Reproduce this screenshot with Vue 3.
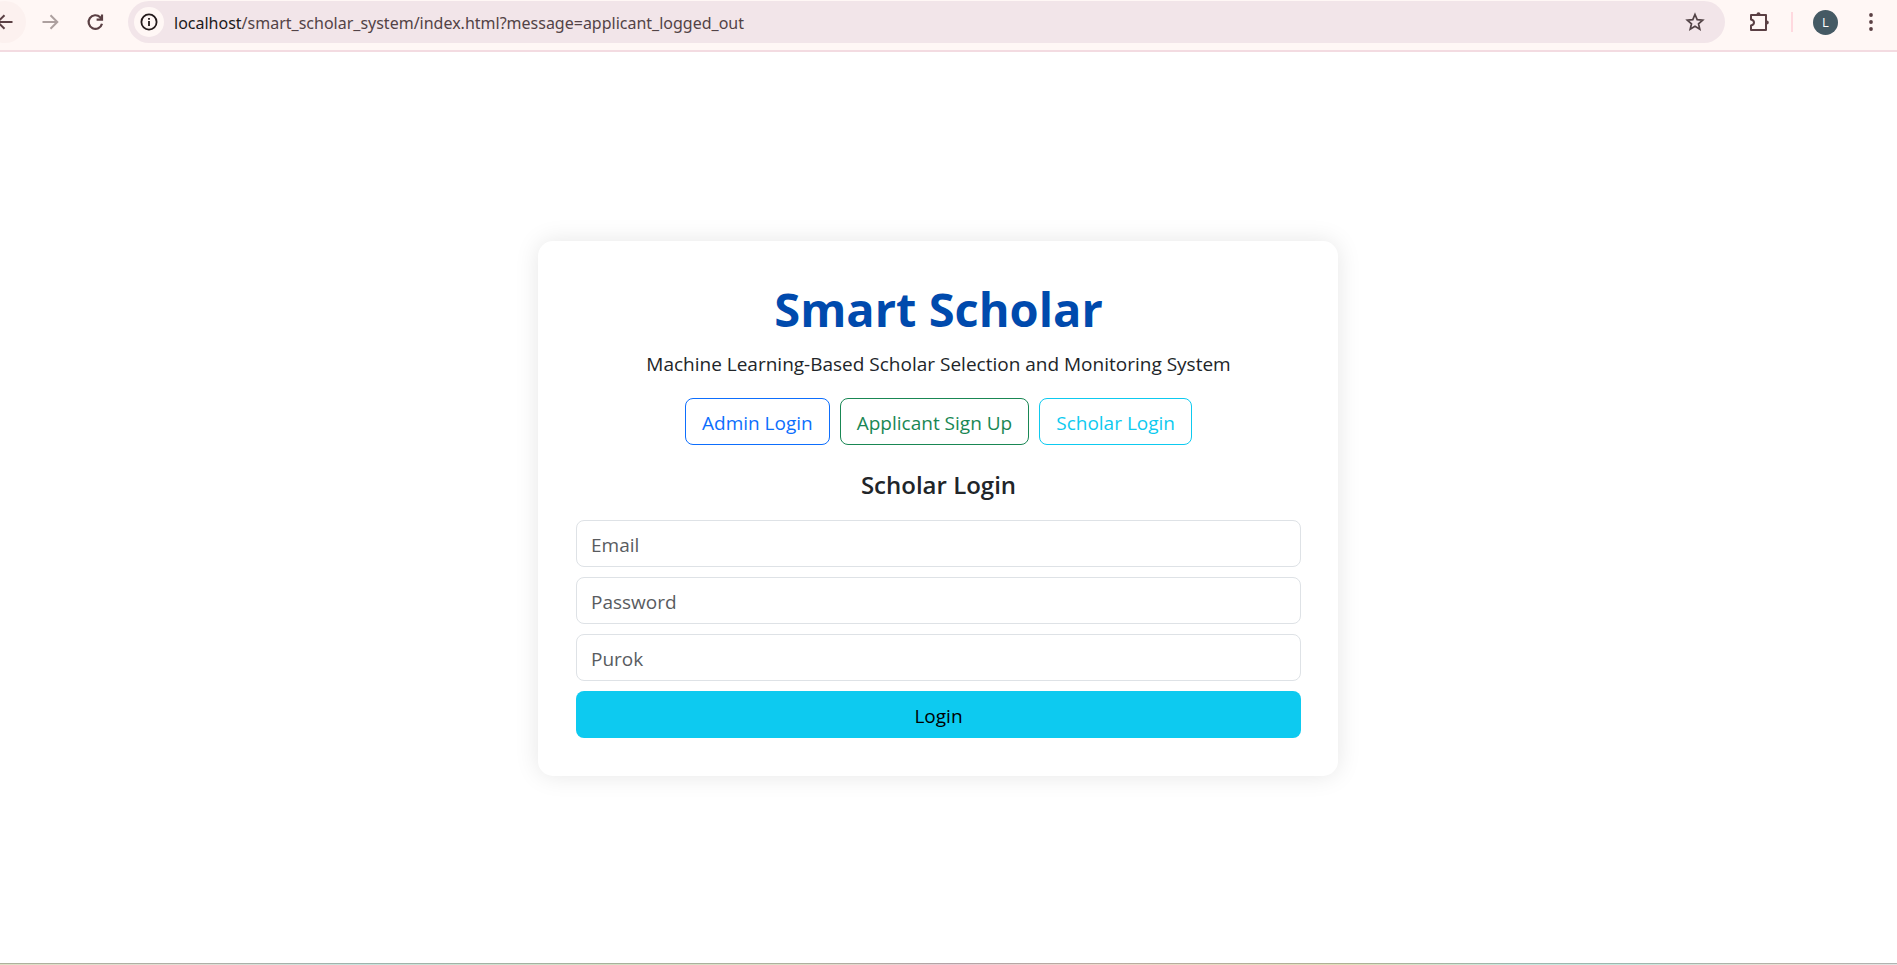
<script setup>
import { ref } from 'vue'

const address = { host: 'localhost', path: '/smart_scholar_system/index.html?message=applicant_logged_out' }
const roles = [
  { label: 'Admin Login', tone: 'blue' },
  { label: 'Applicant Sign Up', tone: 'green' },
  { label: 'Scholar Login', tone: 'cyan' },
]
const fields = [
  { id: 'email', label: 'Email', type: 'email', value: ref('') },
  { id: 'password', label: 'Password', type: 'password', value: ref('') },
  { id: 'purok', label: 'Purok', type: 'text', value: ref('') },
]
</script>

<template>
  <div class="browser">
    <header class="toolbar">
      <nav class="history" aria-label="Navigation">
        <button class="tool back" type="button" aria-label="Back">
          <svg width="20" height="20" viewBox="0 0 20 20" fill="none" stroke="currentColor" stroke-width="2"><path d="M17.500 10H3M9.500 3.200L2.700 10L9.500 16.800" /></svg>
        </button>
        <button class="tool forward" type="button" aria-label="Forward" disabled>
          <svg width="20" height="20" viewBox="0 0 20 20" fill="none" stroke="currentColor" stroke-width="2"><path d="M2.500 10H17M10.500 3.200L17.300 10L10.500 16.800" /></svg>
        </button>
        <button class="tool reload" type="button" aria-label="Reload">
          <svg width="20" height="20" viewBox="0 0 20 20" fill="none" stroke="currentColor" stroke-width="2.200"><path d="M17 11.800A6.800 6.800 0 1 1 15.200 5.200L16.900 7M17 2.500V7.700H11.600" /></svg>
        </button>
      </nav>
      <div class="omnibox">
        <button class="info" type="button" aria-label="View site information">
          <svg width="18" height="18" viewBox="0 0 18 18" fill="none" stroke="currentColor" stroke-width="1.800"><circle cx="9" cy="9" r="7.600" /><path d="M9 8V13M9 5V6.800" /></svg>
        </button>
        <div class="address"><span class="host">{{ address.host }}</span>{{ address.path }}</div>
        <button class="star" type="button" aria-label="Bookmark this tab">
          <svg width="20" height="20" viewBox="0 0 20 20" fill="none" stroke="currentColor" stroke-width="1.700"><path d="M10 2.500L12.200 7.600L17.700 8.100L13.500 11.800L14.800 17.200L10 14.300L5.200 17.200L6.500 11.800L2.300 8.100L7.800 7.600Z" /></svg>
        </button>
      </div>
      <div class="actions">
        <button class="tool" type="button" aria-label="Extensions">
          <svg width="22" height="22" viewBox="0 0 22 22" fill="none" stroke="currentColor" stroke-width="2" stroke-linejoin="round"><path d="M3 4H18V19H3V14.500Q6 13.800 6 11.500T3 8.500Z" /><path d="M8.500 3.200A2 2 0 0 1 12.500 3.200ZM18.800 9.500A2 2 0 0 1 18.800 13.500Z" fill="currentColor" stroke="none" /></svg>
        </button>
        <span class="divider"></span>
        <button class="avatar" type="button" aria-label="Profile">L</button>
        <button class="tool more" type="button" aria-label="More">
          <svg width="6" height="20" viewBox="0 0 6 20" fill="currentColor"><circle cx="3" cy="3" r="1.900" /><circle cx="3" cy="10" r="1.900" /><circle cx="3" cy="17" r="1.900" /></svg>
        </button>
      </div>
    </header>

    <main class="page">
      <section class="card">
        <h1 class="title">Smart Scholar</h1>
        <p class="subtitle">Machine Learning-Based Scholar Selection and Monitoring System</p>
        <div class="roles">
          <button v-for="role in roles" :key="role.label" class="role" :class="role.tone" type="button">{{ role.label }}</button>
        </div>
        <form class="form" @submit.prevent>
          <h2 class="heading">Scholar Login</h2>
          <input v-for="f in fields" :id="f.id" :key="f.id" v-model="f.value.value" class="field" :type="f.type" :placeholder="f.label" :aria-label="f.label" />
          <button class="submit" type="submit">Login</button>
        </form>
      </section>
    </main>
    <div class="edge"></div>
  </div>
</template>

<style>
body {
  margin: 0;
  background: #fff;
}
</style>

<style scoped>
* {
  box-sizing: border-box;
}
button,
input {
  margin: 0;
  font: inherit;
}
svg {
  display: block;
}
.browser {
  display: flex;
  flex-direction: column;
  min-height: 100vh;
  overflow: hidden;
  font-family: "Open Sans", "Noto Sans", sans-serif;
  font-size: 19px;
  line-height: 30px;
  color: #212529;
}
.toolbar {
  display: flex;
  align-items: center;
  height: 52px;
  padding-bottom: 6px;
  border-bottom: 2px solid #f3dbe1;
  background: #fff7f5;
}
.history {
  display: flex;
  gap: 3px;
  margin-left: -16px;
}
.tool {
  display: flex;
  align-items: center;
  justify-content: center;
  width: 42px;
  height: 42px;
  padding: 0;
  border: 0;
  border-radius: 50%;
  background: none;
  color: #5b4044;
}
.back {
  background: #fcf1ef;
}
.forward {
  color: #ada09f;
}
.omnibox {
  display: flex;
  flex: 1;
  align-items: center;
  height: 42px;
  margin-left: 12px;
  padding: 0 20px 0 6px;
  border-radius: 21px;
  background: #f2e5e9;
}
.info {
  display: flex;
  align-items: center;
  justify-content: center;
  width: 30px;
  height: 30px;
  padding: 0;
  border: 0;
  border-radius: 50%;
  background: #fff7f5;
  color: #231a1b;
}
.address {
  flex: 1;
  margin-left: 10px;
  padding-top: 1px;
  font-family: "Noto Sans", "Open Sans", sans-serif;
  font-size: 16px;
  color: #524346;
}
.host {
  color: #201a1b;
}
.star {
  padding: 0;
  border: 0;
  background: none;
  color: #524346;
}
.actions {
  display: flex;
  align-items: center;
  margin-left: 13px;
}
.divider {
  width: 2px;
  height: 20px;
  margin-left: 11px;
  background: #ffd9df;
}
.avatar {
  width: 25px;
  height: 25px;
  margin-left: 20px;
  padding: 0;
  border: 0;
  border-radius: 50%;
  background: #455a64;
  color: #fff;
  font-size: 13px;
  line-height: 25px;
}
.more {
  margin: 0 5px 0 12px;
}
.page {
  display: flex;
  flex: 1;
  align-items: center;
  justify-content: center;
  padding: 2px 21px 0 0;
}
.card {
  width: 100%;
  max-width: 800px;
  padding: 38px 37px 38px 38px;
  border-radius: 15px;
  background: #fff;
  box-shadow: 0 0 25px rgba(0, 0, 0, 0.1);
  text-align: center;
}
.title {
  margin: 0 0 10px;
  font-size: 47px;
  font-weight: 700;
  line-height: 60px;
  color: #004aad;
}
.subtitle {
  margin: 0 0 19px;
}
.roles {
  display: flex;
  justify-content: center;
  gap: 10px;
  margin-bottom: 25px;
}
.role {
  height: 47px;
  padding: 2px 16px 0;
  border: 1px solid currentColor;
  border-radius: 8px;
  background: #fff;
}
.blue {
  color: #0d6efd;
}
.green {
  color: #198754;
}
.cyan {
  color: #0dcaf0;
}
.form {
  display: flex;
  flex-direction: column;
  gap: 10px;
}
.heading {
  margin: 0 0 10px;
  font-size: 24px;
  font-weight: 600;
  line-height: 30px;
}
.field {
  width: 100%;
  height: 47px;
  padding: 2px 14px 0;
  border: 1px solid #dee2e6;
  border-radius: 8px;
  background: #fff;
  color: #212529;
}
.field::placeholder {
  color: #595c5f;
  opacity: 1;
}
.submit {
  height: 47px;
  padding: 2px 0 0;
  border: 0;
  border-radius: 8px;
  background: #0dcaf0;
  color: #000;
}
.edge {
  height: 2px;
  background:
    linear-gradient(rgba(60, 70, 65, 0.3) 50%, transparent 50%),
    linear-gradient(90deg, #dedfc4, #e2ddd4 10%, #c9e3dd 19%, #d5dfc4 32%, #dfdfc8 42%, #e8ccd4 50%, #efd8cc 58%, #e0dfba 71%, #c8e8de 80%, #c8e8de 86%, #eadfd3 94%, #e2e2e2);
}
</style>
